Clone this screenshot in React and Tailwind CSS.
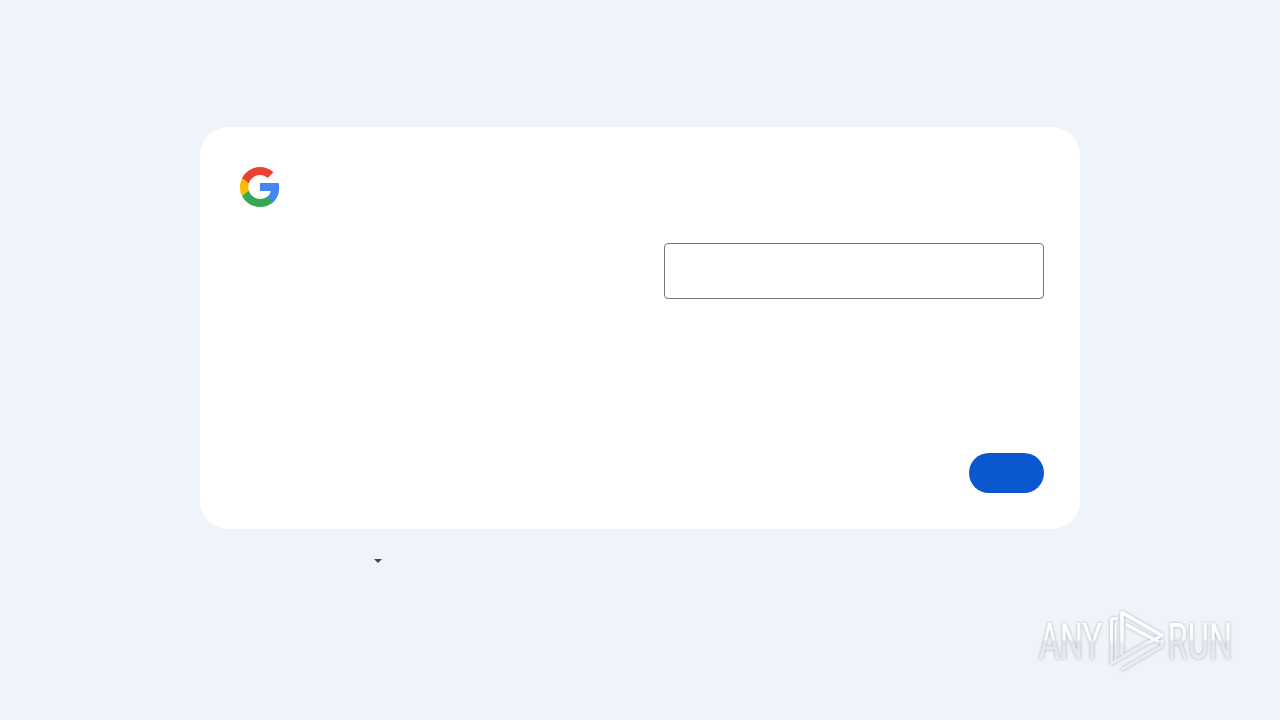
function GoogleLogo() {
  return (
    <svg className="h-12 w-10" viewBox="0 0 40 48" aria-hidden="true">
      <path fill="#4285F4" d="M39.2 24.45c0-1.55-.16-3.04-.43-4.45H20v8h10.73c-.45 2.53-1.86 4.68-4 6.11v5.05h6.5c3.78-3.48 5.97-8.62 5.97-14.71z" />
      <path fill="#34A853" d="M20 44c5.4 0 9.92-1.79 13.24-4.84l-6.5-5.05C24.95 35.3 22.67 36 20 36c-5.19 0-9.59-3.51-11.15-8.23h-6.7v5.2C5.43 39.51 12.18 44 20 44z" />
      <path fill="#FABB05" d="M8.85 27.77c-.4-1.19-.62-2.46-.62-3.77s.22-2.58.62-3.77v-5.2h-6.7C.78 17.73 0 20.77 0 24s.78 6.27 2.14 8.97l6.71-5.2z" />
      <path fill="#E94235" d="M20 12c2.93 0 5.55 1.01 7.62 2.98l5.76-5.76C29.92 5.98 25.39 4 20 4 12.18 4 5.43 8.49 2.14 15.03l6.7 5.2C10.41 15.51 14.81 12 20 12z" />
    </svg>
  );
}

function Watermark() {
  const word = { fontFamily: 'Roboto, sans-serif', fontSize: 50, fontWeight: 400, fill: 'url(#letters)' };
  const line = { fill: 'none', stroke: 'url(#mark)', strokeLinejoin: 'round', strokeLinecap: 'round' };
  return (
    <svg className="pointer-events-none absolute right-0 bottom-0 h-[140px] w-[270px]" viewBox="1010 580 270 140">
      <defs>
        <linearGradient id="letters" gradientUnits="userSpaceOnUse" x1="0" y1="-37" x2="0" y2="1">
          <stop offset="0" stopColor="#ffffff" />
          <stop offset="0.46" stopColor="#f7f9fc" />
          <stop offset="0.52" stopColor="#e1e5e9" />
          <stop offset="1" stopColor="#e9ecf1" />
        </linearGradient>
        <linearGradient id="mark" gradientUnits="userSpaceOnUse" x1="0" y1="610" x2="0" y2="672">
          <stop offset="0" stopColor="#ffffff" />
          <stop offset="0.48" stopColor="#fafcff" />
          <stop offset="0.56" stopColor="#e7eaee" />
          <stop offset="1" stopColor="#eceff4" />
        </linearGradient>
        <filter id="shade" x="-10%" y="-20%" width="120%" height="140%">
          <feDropShadow dx="0" dy="0" stdDeviation="1.7" floodColor="#777b80" floodOpacity="0.6" />
        </filter>
      </defs>
      <g filter="url(#shade)">
        <text transform="translate(1039 659) scale(0.645 1)" {...word}>ANY</text>
        <text transform="translate(1167.500 659) scale(0.655 1)" {...word}>RUN</text>
        <path d="M1116.500 618.500H1113.500L1111.500 620V663.500L1159 637" strokeWidth="3" {...line} />
        <path d="M1115.500 626V661" strokeWidth="1.500" {...line} />
        <path d="M1125 655L1148 642M1122.500 669L1162 646V641" strokeWidth="3" {...line} />
        <path d="M1122 654V612.500L1162 635.500M1127 625L1158 641.500" strokeWidth="3.500" {...line} />
      </g>
    </svg>
  );
}

export default function App() {
  return (
    <main className="relative flex h-screen flex-col items-center overflow-hidden bg-[#eff3fa] pt-[127px] font-['Roboto',sans-serif]">
      <section className="flex h-[402px] w-[880px] flex-col rounded-[28px] bg-white p-9 pl-10">
        <GoogleLogo />
        <form className="flex flex-1 flex-col items-end justify-between pt-8" onSubmit={(e) => e.preventDefault()}>
          <input className="h-14 w-[380px] rounded border border-[#747775] bg-transparent px-3 outline-none" />
          <button className="h-10 w-[75px] rounded-full bg-[#0b57d0]" />
        </form>
      </section>
      <footer className="flex h-16 w-[880px] items-center pl-[174px]">
        <svg className="h-1 w-2" viewBox="0 0 8 4">
          <path d="M0 0h8L4 4z" fill="#444746" />
        </svg>
      </footer>
      <Watermark />
    </main>
  );
}
